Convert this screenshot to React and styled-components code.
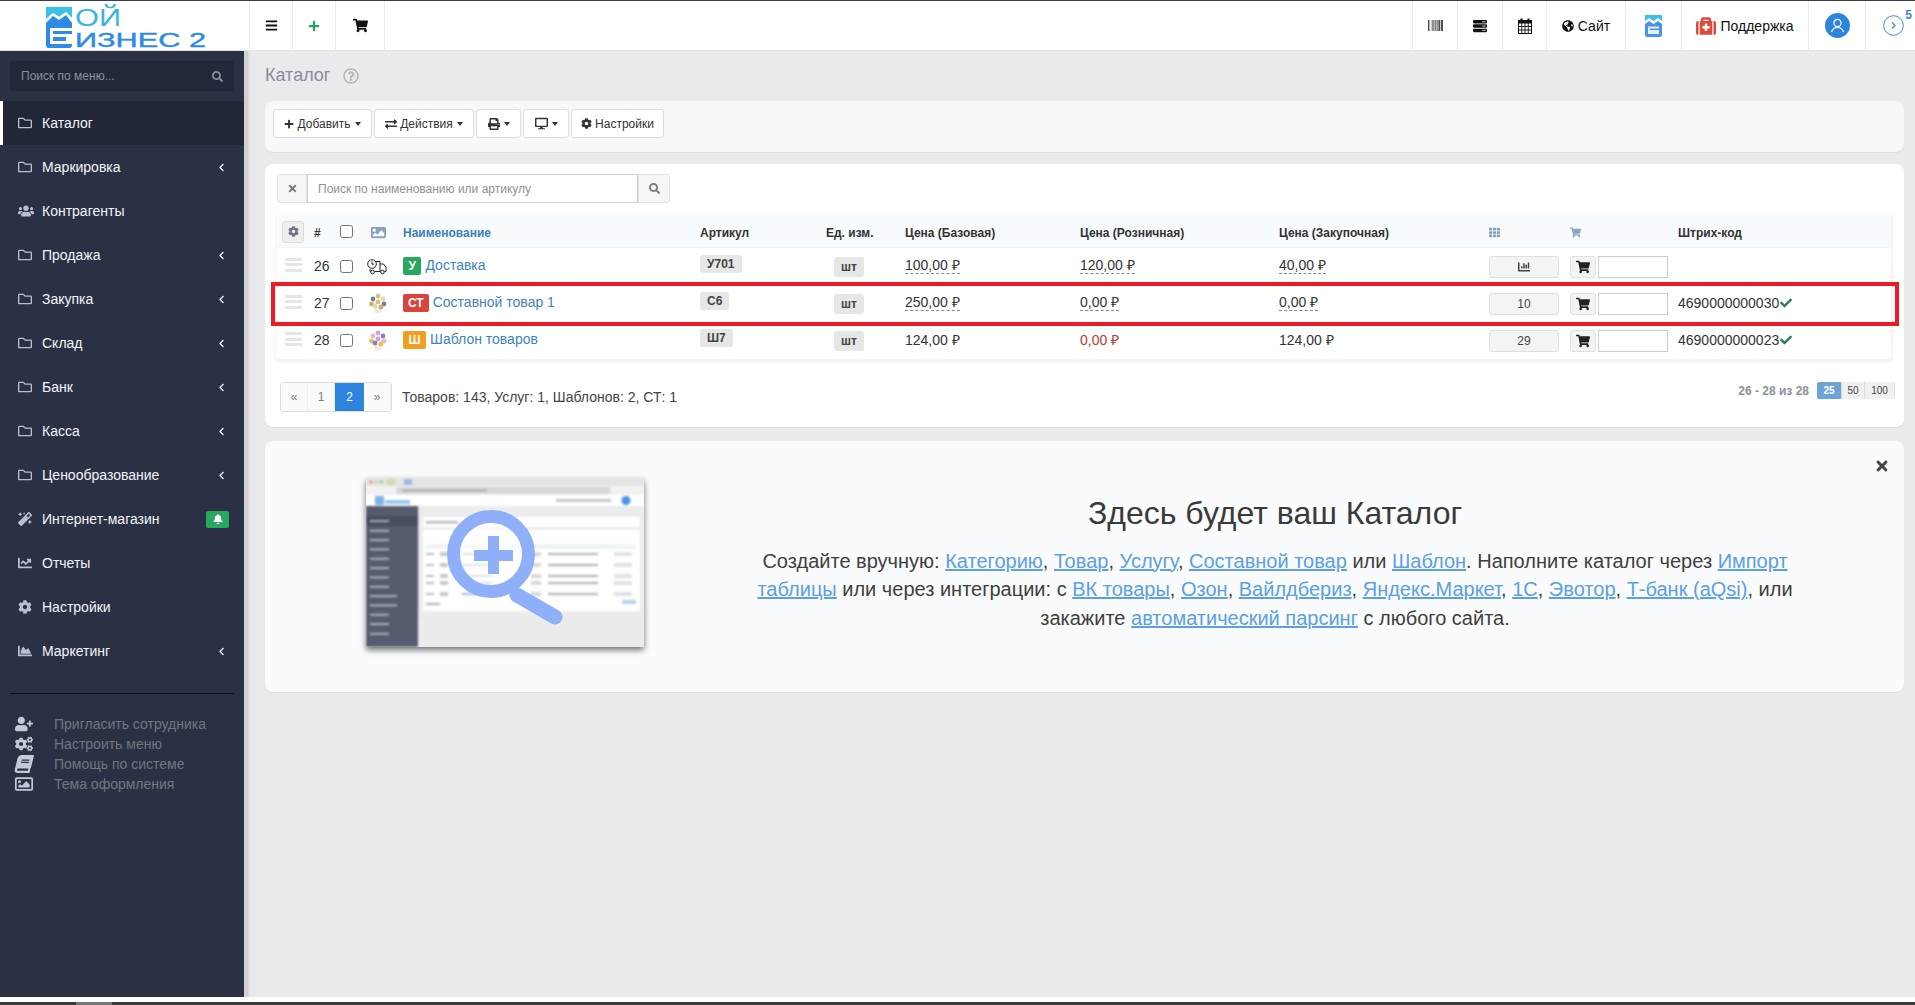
import React from "react";
import styled, { createGlobalStyle } from "styled-components";
import {
  FaBars, FaPlus, FaShoppingCart, FaBarcode, FaServer, FaGlobeAmericas, FaMedkit,
  FaRegFolder, FaUsers, FaMagic, FaChartLine, FaCog, FaChartArea, FaBell, FaUserPlus, FaCogs, FaBook,
  FaRegImage, FaImage, FaSearch, FaPrint, FaDesktop, FaExchangeAlt, FaTimes, FaRegQuestionCircle, FaTh,
  FaCheck, FaChartBar, FaChevronLeft,
} from "react-icons/fa";

const Global = createGlobalStyle`
  html, body { margin: 0; padding: 0; background: #e9eaec; }
  * { box-sizing: border-box; }
  body { font-family: "Liberation Sans", Arial, sans-serif; font-size: 14px; color: #333; overflow: hidden; }
`;

const Shell = styled.div`
  width: 1915px; height: 1005px; display: flex; flex-direction: column; overflow: hidden; background: #e9eaec;
`;
const Header = styled.header`
  height: 51px; flex: none; display: flex; justify-content: space-between; background: #fff;
  border-top: 1px solid #3a3d46; border-bottom: 1px solid #e4e5e7;
`;
const HeaderGroup = styled.div`display: flex;`;
const HeaderCell = styled.div`
  width: ${(p) => p.$w}px; flex: none; display: flex; align-items: center; justify-content: center; gap: 4px;
  color: ${(p) => p.$color || "#111"}; font-size: 14px; position: relative;
  ${(p) => (p.$side === "left" ? "border-left" : "border-right")}: 1px solid #ececec;
`;
const Badge5 = styled.span`
  position: absolute; top: 7px; right: 3px; font-size: 12px; font-weight: bold; color: #3d86e0;
`;
const NextWrap = styled.span`display: flex; margin-left: 6px;`;
const UserDot = styled.span`
  width: 25px; height: 25px; border-radius: 50%; background: #2d85de; display: flex; align-items: center; justify-content: center;
`;
const Body = styled.div`flex: 1; display: flex; min-height: 0;`;
const Sidebar = styled.aside`
  width: 244px; flex: none; background: #2b3144; display: flex; flex-direction: column;
`;
const Strip = styled.div`
  width: 6px; flex: none; background: linear-gradient(90deg, #d1d1d1 0 4px, #dfdfdf 4px 6px);
`;
const MenuSearch = styled.div`
  margin: 10px 10px 10px; height: 30px; background: #222839; border-radius: 3px; display: flex; align-items: center;
  justify-content: space-between; padding: 0 11px 0 11px; color: #8c919c;
`;
const GhostInput = styled.input`
  background: none; border: 0; outline: 0; width: 170px; padding: 0; font: 12px "Liberation Sans", Arial, sans-serif; color: #8c919c;
  &::placeholder { color: #8c919c; opacity: 1; }
`;
const MenuItem = styled.div`
  height: 44px; display: flex; align-items: center; padding-left: ${(p) => (p.$active ? "15px" : "18px")};
  padding-right: 18px; color: #f2f4f8; font-size: 14px;
  background: ${(p) => (p.$active ? "#212737" : "transparent")};
  border-left: ${(p) => (p.$active ? "3px solid #fff" : "0")};
`;
const MenuIcon = styled.span`
  width: 24px; flex: none; display: flex; align-items: center; color: #b9bfd0; font-size: ${(p) => p.$s || 14}px;
`;
const MenuLabel = styled.span`flex: 1;`;
const Chevron = styled.span`color: #e8eaf0; font-size: 9px; display: flex; margin-right: 0;`;
const GreenTag = styled.span`
  width: 23px; height: 17px; background: #27a85f; border-radius: 2px; color: #fff; font-size: 10px; margin-right: -3px;
  display: flex; align-items: center; justify-content: center;
`;
const SideRule = styled.div`height: 1px; margin: 20px 10px 20px; background: #0e1018;`;
const FootLink = styled.div`
  height: 20px; display: flex; align-items: center; padding-left: 15px; color: #71767f; font-size: 14px;
`;
const FootIcon = styled.span`width: 39px; flex: none; display: flex; color: #c3c9d8; font-size: 18px;`;
const TiltedBook = styled(FaBook)`transform: skewX(-14deg);`;

const Main = styled.main`
  flex: 1; min-width: 0; padding: 0 11px 0 15px; display: flex; flex-direction: column;
`;
const PageTitle = styled.div`
  height: 50px; display: flex; align-items: center; gap: 13px; font-size: 18px; color: #868e98; padding-bottom: 1px;
`;
const HelpMark = styled.span`display: flex; color: #b0b6be; font-size: 16px;`;
const ToolbarCard = styled.section`
  height: 51px; background: #f7f8fa; border-radius: 8px; display: flex; align-items: flex-start; gap: 2px;
  padding: 8px 8px; box-shadow: 0 1px 1px #dcdde0;
`;
const ToolButton = styled.button`
  width: ${(p) => p.$w}px; height: 29px; background: #fff; border: 1px solid #ddd; border-radius: 3px; display: flex;
  align-items: center; justify-content: center; gap: 3px; color: #333; font: 12px "Liberation Sans", Arial, sans-serif; padding: 0;
`;
const Caret = styled.span`
  width: 0; height: 0; margin-left: 1px; border-left: 3.5px solid transparent; border-right: 3.5px solid transparent; border-top: 4px solid #333;
`;
const TableCard = styled.section`
  margin-top: 12px; height: 263px; background: #fff; border-radius: 8px; padding: 10px 10px 0; box-shadow: 0 1px 1px #dcdde0;
`;
const SearchRow = styled.div`display: flex; height: 29px; margin-left: 2px; width: 393px;`;
const AddonBtn = styled.span`
  width: ${(p) => p.$w}px; flex: none; background: #f6f6f6; border: 1px solid #e2e2e2; display: flex; align-items: center; justify-content: center;
  color: #777; font-size: 11px; border-radius: ${(p) => p.$r};
`;
const SearchInput = styled.input`
  flex: 1; min-width: 0; border: 1px solid #cfcfcf; outline: 0; padding: 0 10px; font: 12px "Liberation Sans", Arial, sans-serif; color: #555;
  &::placeholder { color: #8f8f8f; opacity: 1; }
`;
const TableWrap = styled.div`
  position: relative; margin-top: 12px; width: 1618px; border: solid #f2f3f4; border-width: 0 2px 3px 1px;
`;
const Row = styled.div`
  display: grid; height: ${(p) => (p.$head ? "33px" : "37px")};
  grid-template-columns: 38px 26px 25px 38px 297px 126px 79px 175px 199px 210px 81px 108px 215px;
  align-items: center; background: ${(p) => (p.$head ? "#f8fbfd" : "#fff")};
  ${(p) => (p.$head ? "padding-top: 4px; font-weight: bold; font-size: 12px; color: #333; border-bottom: 1px solid #f1f3f4;" : "")}
`;
const Cell = styled.div`display: flex; align-items: center; min-width: 0; white-space: nowrap;`;
const PicCell = styled(Cell)`padding-left: ${(p) => p.$pl}px;`;
const GearButton = styled.span`
  width: 22px; height: 22px; margin-left: 6px; margin-top: -3px; background: #efefef; border: 1px solid #ddd; border-radius: 3px; display: flex; align-items: center; justify-content: center; color: #6d7482; font-size: 11px;
`;
const Drag = styled.span`
  width: 17px; height: 14px; margin-left: 9px; margin-top: -3px;
  background: repeating-linear-gradient(180deg, #e4e6e9 0 3px, transparent 3px 5.5px);
`;
const Check = styled.input.attrs({ type: "checkbox" })`width: 13px; height: 13px; margin: 0;`;
const HeadCheck = styled(Check)`margin-top: -4px;`;
const Muted = styled.span`display: flex; color: #8da3bb; font-size: ${(p) => p.$s || 15}px; margin-left: ${(p) => p.$ml || 0}px; margin-top: -2px;`;
const HeadLink = styled.span`color: #3e7fb8;`;
const TypeTag = styled.span`
  height: 18px; padding: 0 ${(p) => p.$pad}px; border-radius: 2px; background: ${(p) => p.$bg}; color: #fff; font-weight: bold; font-size: 12px;
  display: inline-flex; align-items: center; margin-right: 4px; margin-top: -2px;
`;
const ItemLink = styled.a`color: #3f84bd; font-size: 14px; margin-top: -3px;`;
const NumText = styled.span`font-size: 14px; color: #333; margin-top: -2px;`;
const Sku = styled.span`
  height: 18px; padding: 0 7px; background: #e6e6e6; border-radius: 3px; font-weight: bold; font-size: 12px; color: #444; display: inline-flex; align-items: center; margin-top: -5px;
`;
const Unit = styled.span`
  margin-left: 8px; width: 30px; height: 20px; background: #e6e6e6; border-radius: 3px; font-weight: bold; font-size: 12px; color: #444; display: flex; align-items: center; justify-content: center;
`;
const Price = styled.span`
  color: ${(p) => p.$color || "#333"}; font-size: 14px; margin-top: -2px; line-height: 16px;
  ${(p) => (p.$dash ? "border-bottom: 1px dashed #888;" : "")}
`;
const StockBtn = styled.span`
  width: 70px; height: 22px; background: #f4f4f4; border: 1px solid #e0e0e0; border-radius: 3px; display: flex; align-items: center; justify-content: center; font-size: 12px; color: #444;
`;
const CartGroup = styled.div`display: flex; gap: 2px;`;
const CartBtn = styled.span`
  width: 26px; height: 22px; background: #f4f4f4; border: 1px solid #e0e0e0; border-radius: 3px; display: flex; align-items: center; justify-content: center; font-size: 14px; color: #222;
`;
const QtyInput = styled.input`width: 70px; height: 22px; border: 1px solid #ccc; padding: 0 4px; outline: 0; background: #fff;`;
const Barcode = styled.span`display: flex; align-items: center; gap: 1px; font-size: 14px; color: #333; margin-top: -2px;`;
const GreenCheck = styled.span`display: flex; color: #2f7d52; font-size: 12px;`;
const Annotation = styled.div`
  position: absolute; left: -5px; top: 67px; width: 1628px; height: 44px; border: 4px solid #ed1c24; pointer-events: none;
`;
const PagerRow = styled.div`
  margin-top: 20px; margin-right: -1px; padding: 0 0 0 5px; display: flex; justify-content: space-between; align-items: flex-start;
`;
const PagerLeft = styled.div`display: flex; align-items: center; gap: 10px;`;
const Pager = styled.div`display: flex; height: 30px; border: 1px solid #ddd; border-radius: 3px; overflow: hidden;`;
const PageBtn = styled.span`
  width: ${(p) => p.$w}px; display: flex; align-items: center; justify-content: center; font-size: 12px;
  color: ${(p) => (p.$on ? "#fff" : "#6f8090")}; background: ${(p) => (p.$on ? "#2d85de" : "#fafafa")};
  border-right: ${(p) => (p.$on ? "0" : "1px solid #eee")};
`;
const Totals = styled.span`font-size: 14px; color: #444;`;
const PagerRight = styled.div`display: flex; align-items: center; gap: 8px;`;
const RangeText = styled.span`font-weight: bold; font-size: 12px; color: #8b929b;`;
const SizeGroup = styled.div`display: flex; height: 17px; border-radius: 2px; overflow: hidden;`;
const SizeBtn = styled.span`
  width: ${(p) => p.$w}px; display: flex; align-items: center; justify-content: center; font-size: 10px; font-weight: ${(p) => (p.$on ? "bold" : "normal")};
  background: ${(p) => (p.$on ? "#6fa3d8" : "#f0f0f0")}; color: ${(p) => (p.$on ? "#fff" : "#444")}; border-right: 1px solid #ddd;
`;
const PromoCard = styled.section`
  position: relative; margin-top: 14px; height: 251px; background: #fafbfc; border-radius: 8px; box-shadow: 0 1px 1px #dcdde0;
  display: flex; padding-left: 101px; padding-top: 37px;
`;
const PromoShot = styled.div`
  width: 278px; height: 169px; flex: none; box-shadow: 0 3px 6px rgba(0,0,0,.55); background: #ececec;
`;
const PromoText = styled.div`
  width: 1050px; margin-left: 106px; text-align: center; margin-top: -1px;
`;
const PromoTitle = styled.h2`
  margin: 18px 0 0; font-weight: normal; font-size: 32px; line-height: 36px; color: #3a3a3a;
`;
const PromoPara = styled.p`
  margin: 15.5px 0 0; font-size: 20px; line-height: 28.6px; color: #3f3f3f;
  a { color: #5b9fe6; text-decoration: underline; }
`;
const CloseX = styled.span`
  position: absolute; right: 14px; top: 17px; font-size: 16px; color: #444; display: flex;
`;
const Foot = styled.div`
  height: 8px; flex: none; display: flex; flex-direction: column; background: #fff;
`;
const FootBar = styled.div`
  margin-top: 5px; height: 3px; background: linear-gradient(90deg, #3b3b3b 0 76px, #777 76px 112px, #3b3b3b 112px);
`;

const Logo = () => (
  <svg width="170" height="46" viewBox="0 0 170 46" style={{ marginLeft: "10px", marginTop: "2px" }}>
    <rect x="1" y="17" width="26" height="27" rx="3" fill="#2e8ae6" />
    <path d="M1 3 H27 V14 L21 8 L14 13 L8 9 L1 15 Z" fill="#39c1e6" />
    <path d="M1 15 L8 9 L14 13 L21 8 L27 14 V19 L21 11 L14 16 L8 12 L1 19 Z" fill="#fff" />
    <rect x="1" y="19" width="26" height="3" fill="#2e8ae6" />
    <path d="M1 19 L8 12 L14 16 L21 11 L27 19 Z" fill="#2e8ae6" />
    <rect x="5" y="24" width="22" height="16" fill="#fff" />
    <rect x="8" y="27" width="19" height="3" fill="#2e8ae6" />
    <rect x="8" y="33" width="13" height="4" fill="#2e8ae6" />
    <text x="30" y="22" fontFamily="Liberation Sans" fontSize="23" fill="#3bb4e2" textLength="46" lengthAdjust="spacingAndGlyphs">ОЙ</text>
    <text x="30" y="43" fontFamily="Liberation Sans" fontSize="20" fill="#2e8ae6" stroke="#2e8ae6" strokeWidth=".4" textLength="131" lengthAdjust="spacingAndGlyphs">ИЗНЕС 2</text>
  </svg>
);

const MiniLogo = () => (
  <svg width="17" height="22" viewBox="0 0 17 22">
    <path d="M0 0 H17 V6 L13 3 L8.5 6 L4 3 L0 6 Z" fill="#39c1e6" />
    <path d="M0 9 L4 6 L8.5 9 L13 6 L17 9 V20 a2 2 0 0 1 -2 2 H2 a2 2 0 0 1 -2 -2 Z" fill="#4a93e8" />
    <rect x="3" y="11.5" width="11" height="7.5" fill="#e6f0fc" />
    <rect x="5" y="13.5" width="9" height="1.5" fill="#4a93e8" />
  </svg>
);

const GridCalendar = () => (
  <svg width="14" height="16" viewBox="0 0 14 16" fill="none" stroke="#111" strokeWidth="1">
    <rect x=".5" y="2.5" width="13" height="13" />
    <rect x="0" y="2" width="14" height="3.5" fill="#111" stroke="none" />
    <path d="M3.5 0.5 V3.5 M10.5 0.5 V3.5" strokeWidth="2" />
    <path d="M3.75 5 V15.5 M7 5 V15.5 M10.25 5 V15.5 M.5 8.5 H13.5 M.5 12 H13.5" strokeWidth=".9" />
  </svg>
);

const CircleNext = () => (
  <svg width="21" height="21" viewBox="0 0 21 21" fill="none" stroke="#3d86e0" strokeWidth="1">
    <circle cx="10.5" cy="10.5" r="9.8" />
    <path d="M9 7.5 L12 10.5 L9 13.5" strokeWidth="1.2" />
  </svg>
);

const UserOutline = () => (
  <svg width="15" height="15" viewBox="0 0 15 15" fill="none" stroke="#fff" strokeWidth="1.2">
    <circle cx="7.5" cy="5" r="3.6" />
    <path d="M1.5 14 C2.5 10.5 5 9.5 7.5 9.5 C10 9.5 12.5 10.5 13.5 14" />
  </svg>
);

const TruckClock = () => (
  <svg width="20" height="16" viewBox="0 0 20 16" fill="none" stroke="#222" strokeWidth="1">
    <circle cx="5" cy="5" r="4.3" />
    <path d="M5 2.5 V5.2 H7" />
    <path d="M8 2.5 H13 V12.5 H8 M3 10 V12.5 H4" />
    <path d="M13 5 H16.5 L19 8.5 V12.5 H17.5" />
    <circle cx="5.5" cy="13" r="1.8" fill="#fff" />
    <circle cx="15.5" cy="13" r="1.8" fill="#fff" />
  </svg>
);

const Bouquet = ({ tones }) => (
  <svg width="18" height="21" viewBox="0 0 18 21" style={{ filter: "blur(.5px)" }}>
    <ellipse cx="9" cy="17" rx="4" ry="3.5" fill="#f0ece2" />
    {[[9, 3], [4, 6], [14, 6], [2.5, 11], [9, 9], [15, 11], [6, 13], [12, 14]].map(([x, y], i) => (
      <circle key={i} cx={x} cy={y} r="2.4" fill={tones[i % tones.length]} />
    ))}
  </svg>
);

const sideY = [43, 52.7, 62, 71.3, 80.7, 90, 99.3, 108.7, 118, 127.3, 136.7, 146, 155.7];
const rowY = [76, 87, 98, 105, 116];

const PromoPicture = () => (
  <svg width="278" height="169" viewBox="0 0 278 169" style={{ display: "block" }}>
    <g style={{ filter: "blur(.8px)" }}>
      <rect width="278" height="169" fill="#ececec" />
      <rect width="278" height="8" fill="#e4e4e4" />
      <circle cx="5" cy="4" r="1.3" fill="#e0655a" /><circle cx="10" cy="4" r="1.3" fill="#e3b23c" /><circle cx="15" cy="4" r="1.3" fill="#62b456" />
      <rect x="21" y="1" width="8" height="6" rx="1" fill="#d9d8a8" /><rect x="38" y="1" width="8" height="6" rx="1" fill="#9bb8ea" />
      <rect y="8" width="278" height="9" fill="#f2f2f2" />
      <rect x="30" y="9" width="215" height="7" rx="3" fill="#d8d8d8" />
      <rect x="36" y="11.5" width="85" height="2" fill="#a8a8a8" />
      <rect y="17" width="278" height="11" fill="#fff" />
      <rect x="9" y="18" width="9" height="9" rx="1" fill="#7eb2ea" />
      <rect x="19" y="22" width="25" height="4" fill="#9cc4ee" />
      <rect x="190" y="21" width="55" height="3" fill="#c8c8c8" />
      <circle cx="260" cy="22.5" r="4.5" fill="#4a93e8" />
      <rect y="28" width="52" height="141" fill="#555c6e" />
      <rect y="38" width="52" height="10" fill="#484e5f" />
      {sideY.map((y, i) => (
        <rect key={i} x="4" y={y - 0.8} width={i === 8 || i === 9 ? 27 : 19} height="1.8" fill="#b6bac4" />
      ))}
      <rect x="57" y="39" width="217" height="10" fill="#fff" />
      <rect x="60" y="43" width="32" height="2.5" fill="#b8b8b8" />
      <rect x="57" y="52" width="217" height="81" fill="#fff" />
      <rect x="60" y="66" width="210" height="5" fill="#eef3f6" />
      {rowY.map((y) => (
        <g key={y}>
          <rect x="60" y={y - 1} width="8" height="2" fill="#bbb" />
          <rect x="74" y={y - 2} width="8" height="4" fill="#c9c9c9" />
          <rect x="96" y={y - 1} width="30" height="2" fill="#a3b7d8" />
          <rect x="165" y={y - 2} width="10" height="4" fill="#d8d8d8" />
          <rect x="182" y={y - 1} width="50" height="2" fill="#b0b0b0" />
          <rect x="248" y={y - 2} width="18" height="4" fill="#e2e2e2" />
        </g>
      ))}
      <rect x="60" y="125" width="14" height="2" fill="#b0b0b0" />
      <rect x="256" y="122" width="14" height="4" fill="#bcd0ea" />
      <rect x="52" y="28" width="1" height="112" fill="#dcdcdc" />
    </g>
    <circle cx="125" cy="76" r="37.5" fill="rgba(255,255,255,.6)" stroke="#8fb0f8" strokeWidth="13" />
    <line x1="151" y1="117" x2="189" y2="139" stroke="#8fb0f8" strokeWidth="15" strokeLinecap="round" />
    <rect x="122" y="58" width="11" height="38" fill="#8fb0f8" />
    <rect x="108" y="72" width="39" height="11" fill="#8fb0f8" />
  </svg>
);

const menu = [
  { label: "Каталог", icon: <FaRegFolder />, active: true },
  { label: "Маркировка", icon: <FaRegFolder />, more: true },
  { label: "Контрагенты", icon: <FaUsers />, size: 16 },
  { label: "Продажа", icon: <FaRegFolder />, more: true },
  { label: "Закупка", icon: <FaRegFolder />, more: true },
  { label: "Склад", icon: <FaRegFolder />, more: true },
  { label: "Банк", icon: <FaRegFolder />, more: true },
  { label: "Касса", icon: <FaRegFolder />, more: true },
  { label: "Ценообразование", icon: <FaRegFolder />, more: true },
  { label: "Интернет-магазин", icon: <FaMagic />, bell: true },
  { label: "Отчеты", icon: <FaChartLine /> },
  { label: "Настройки", icon: <FaCog /> },
  { label: "Маркетинг", icon: <FaChartArea />, more: true },
];

const foot = [
  { label: "Пригласить сотрудника", icon: <FaUserPlus /> },
  { label: "Настроить меню", icon: <FaCogs /> },
  { label: "Помощь по системе", icon: <TiltedBook /> },
  { label: "Тема оформления", icon: <FaRegImage /> },
];

const rows = [
  { n: 26, pic: <TruckClock />, pl: 2, tag: "У", bg: "#27a85f", pad: 5.5, name: "Доставка", sku: "У701", base: "100,00 ₽", retail: "120,00 ₽", buy: "40,00 ₽", dash: true, stock: <FaChartBar /> },
  { n: 27, pic: <Bouquet tones={["#d9c27a", "#7c7f96", "#e6d9a8", "#c9b070"]} />, pl: 4, tag: "СТ", bg: "#d9433b", pad: 5, name: "Составной товар 1", sku: "С6", base: "250,00 ₽", retail: "0,00 ₽", buy: "0,00 ₽", dash: true, stock: "10", code: "4690000000030" },
  { n: 28, pic: <Bouquet tones={["#c9a3d6", "#e4b8c8", "#8d7cc0", "#e3c45c"]} />, pl: 4, tag: "Ш", bg: "#f0a01e", pad: 5.5, name: "Шаблон товаров", sku: "Ш7", base: "124,00 ₽", retail: "0,00 ₽", retailColor: "#c0392b", buy: "124,00 ₽", stock: "29", code: "4690000000023" },
];

export default function App() {
  return (
    <Shell>
      <Global />
      <Header>
        <HeaderGroup>
          <HeaderCell $w={250}><Logo /></HeaderCell>
          <HeaderCell $w={43}><FaBars size={13} /></HeaderCell>
          <HeaderCell $w={43} $color="#27a85f"><FaPlus size={12} /></HeaderCell>
          <HeaderCell $w={49}><FaShoppingCart size={15} /></HeaderCell>
        </HeaderGroup>
        <HeaderGroup>
          <HeaderCell $w={45} $side="left"><FaBarcode size={15} /></HeaderCell>
          <HeaderCell $w={45} $side="left"><FaServer size={14} /></HeaderCell>
          <HeaderCell $w={44} $side="left"><GridCalendar /></HeaderCell>
          <HeaderCell $w={79} $side="left"><FaGlobeAmericas size={12} />Сайт</HeaderCell>
          <HeaderCell $w={56} $side="left"><MiniLogo /></HeaderCell>
          <HeaderCell $w={127} $side="left"><FaMedkit size={20} color="#e0493c" />Поддержка</HeaderCell>
          <HeaderCell $w={57} $side="left"><UserDot><UserOutline /></UserDot></HeaderCell>
          <HeaderCell $w={50} $side="left"><NextWrap><CircleNext /></NextWrap><Badge5>5</Badge5></HeaderCell>
        </HeaderGroup>
      </Header>
      <Body>
        <Sidebar>
          <MenuSearch>
            <GhostInput placeholder="Поиск по меню..." readOnly />
            <FaSearch size={11} />
          </MenuSearch>
          {menu.map((m) => (
            <MenuItem key={m.label} $active={m.active}>
              <MenuIcon $s={m.size}>{m.icon}</MenuIcon>
              <MenuLabel>{m.label}</MenuLabel>
              {m.more && <Chevron><FaChevronLeft /></Chevron>}
              {m.bell && <GreenTag><FaBell /></GreenTag>}
            </MenuItem>
          ))}
          <SideRule />
          {foot.map((f) => (
            <FootLink key={f.label}>
              <FootIcon>{f.icon}</FootIcon>
              {f.label}
            </FootLink>
          ))}
        </Sidebar>
        <Strip />
        <Main>
          <PageTitle>Каталог<HelpMark><FaRegQuestionCircle /></HelpMark></PageTitle>
          <ToolbarCard>
            <ToolButton $w={99}><FaPlus size={10} />Добавить<Caret /></ToolButton>
            <ToolButton $w={100}><FaExchangeAlt size={12} />Действия<Caret /></ToolButton>
            <ToolButton $w={45}><FaPrint size={12} /><Caret /></ToolButton>
            <ToolButton $w={46}><FaDesktop size={13} /><Caret /></ToolButton>
            <ToolButton $w={93}><FaCog size={11} />Настройки</ToolButton>
          </ToolbarCard>
          <TableCard>
            <SearchRow>
              <AddonBtn $w={30} $r="3px 0 0 3px"><FaTimes /></AddonBtn>
              <SearchInput placeholder="Поиск по наименованию или артикулу" readOnly />
              <AddonBtn $w={32} $r="0 3px 3px 0"><FaSearch /></AddonBtn>
            </SearchRow>
            <TableWrap>
              <Row $head>
                <Cell><GearButton><FaCog /></GearButton></Cell>
                <Cell>#</Cell>
                <Cell><HeadCheck /></Cell>
                <Cell><Muted $ml={6}><FaImage /></Muted></Cell>
                <Cell><HeadLink>Наименование</HeadLink></Cell>
                <Cell>Артикул</Cell>
                <Cell>Ед. изм.</Cell>
                <Cell>Цена (Базовая)</Cell>
                <Cell>Цена (Розничная)</Cell>
                <Cell>Цена (Закупочная)</Cell>
                <Cell><Muted $s={11}><FaTh /></Muted></Cell>
                <Cell><Muted $s={11}><FaShoppingCart /></Muted></Cell>
                <Cell>Штрих-код</Cell>
              </Row>
              {rows.map((r) => (
                <Row key={r.n}>
                  <Cell><Drag /></Cell>
                  <Cell><NumText>{r.n}</NumText></Cell>
                  <Cell><Check /></Cell>
                  <PicCell $pl={r.pl}>{r.pic}</PicCell>
                  <Cell>
                    <TypeTag $bg={r.bg} $pad={r.pad}>{r.tag}</TypeTag>
                    <ItemLink>{r.name}</ItemLink>
                  </Cell>
                  <Cell><Sku>{r.sku}</Sku></Cell>
                  <Cell><Unit>шт</Unit></Cell>
                  <Cell><Price $dash={r.dash}>{r.base}</Price></Cell>
                  <Cell><Price $dash={r.dash} $color={r.retailColor}>{r.retail}</Price></Cell>
                  <Cell><Price $dash={r.dash}>{r.buy}</Price></Cell>
                  <Cell><StockBtn>{r.stock}</StockBtn></Cell>
                  <Cell>
                    <CartGroup>
                      <CartBtn><FaShoppingCart /></CartBtn>
                      <QtyInput readOnly />
                    </CartGroup>
                  </Cell>
                  <Cell>
                    {r.code && (
                      <Barcode>{r.code}<GreenCheck><FaCheck /></GreenCheck></Barcode>
                    )}
                  </Cell>
                </Row>
              ))}
              <Annotation />
            </TableWrap>
            <PagerRow>
              <PagerLeft>
                <Pager>
                  <PageBtn $w={27}>«</PageBtn>
                  <PageBtn $w={27}>1</PageBtn>
                  <PageBtn $w={29} $on>2</PageBtn>
                  <PageBtn $w={27}>»</PageBtn>
                </Pager>
                <Totals>Товаров: 143, Услуг: 1, Шаблонов: 2, СТ: 1</Totals>
              </PagerLeft>
              <PagerRight>
                <RangeText>26 - 28 из 28</RangeText>
                <SizeGroup>
                  <SizeBtn $w={25} $on>25</SizeBtn>
                  <SizeBtn $w={23}>50</SizeBtn>
                  <SizeBtn $w={30}>100</SizeBtn>
                </SizeGroup>
              </PagerRight>
            </PagerRow>
          </TableCard>
          <PromoCard>
            <PromoShot><PromoPicture /></PromoShot>
            <PromoText>
              <PromoTitle>Здесь будет ваш Каталог</PromoTitle>
              <PromoPara>
                Создайте вручную: <a>Категорию</a>, <a>Товар</a>, <a>Услугу</a>, <a>Составной товар</a> или <a>Шаблон</a>. Наполните каталог через <a>Импорт таблицы</a> или через интеграции: с <a>ВК товары</a>, <a>Озон</a>, <a>Вайлдбериз</a>, <a>Яндекс.Маркет</a>, <a>1С</a>, <a>Эвотор</a>, <a>Т-банк (aQsi)</a>, или закажите <a>автоматический парсинг</a> с любого сайта.
              </PromoPara>
            </PromoText>
            <CloseX><FaTimes /></CloseX>
          </PromoCard>
        </Main>
      </Body>
      <Foot><FootBar /></Foot>
    </Shell>
  );
}
